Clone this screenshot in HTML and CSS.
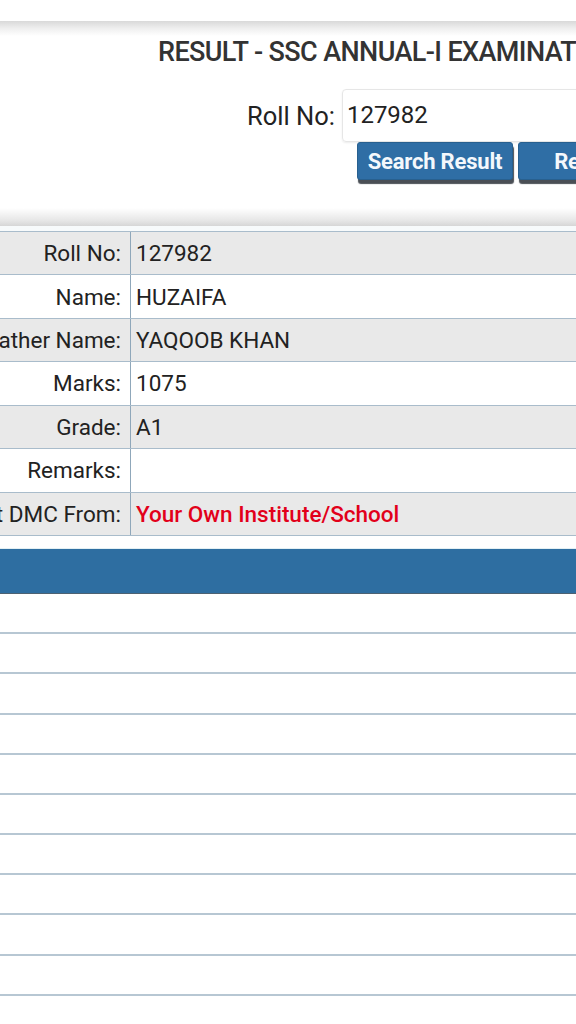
FILE: index.html
```html
<!DOCTYPE html>
<html>
<head>
<meta charset="utf-8">
<link rel="stylesheet" href="styles.css">
</head>
<body>
<div class="top-gap"></div>
<div class="panel">
  <div class="shade-top"></div>
  <div class="title">RESULT - SSC ANNUAL-I EXAMINATION 2023</div>
  <div class="search-row">
    <span class="search-label">Roll No:</span>
    <div class="input">127982</div>
  </div>
  <div class="buttons">
    <button class="btn btn-search">Search Result</button>
    <button class="btn btn-reset">Reset</button>
  </div>
  <div class="shade-bottom"></div>
</div>
<div class="gap-strip"></div>
<div class="result">
  <div class="row grey"><div class="lbl">Roll No:</div><div class="val">127982</div></div>
  <div class="row"><div class="lbl">Name:</div><div class="val">HUZAIFA</div></div>
  <div class="row grey"><div class="lbl">Father Name:</div><div class="val">YAQOOB KHAN</div></div>
  <div class="row"><div class="lbl">Marks:</div><div class="val">1075</div></div>
  <div class="row grey"><div class="lbl">Grade:</div><div class="val">A1</div></div>
  <div class="row"><div class="lbl">Remarks:</div><div class="val"></div></div>
  <div class="row grey"><div class="lbl">Get DMC From:</div><div class="val red">Your Own Institute/School</div></div>
</div>
<div class="sep"></div>
<div class="bar"></div>
<div class="lines">
  <div class="line"></div><div class="line"></div><div class="line"></div>
  <div class="line"></div><div class="line"></div><div class="line"></div>
  <div class="line"></div><div class="line"></div><div class="line"></div>
  <div class="line"></div><div class="line"></div>
</div>
</body>
</html>
```
FILE: styles.css
```css
html, body {
  margin: 0;
  padding: 0;
  background: #ffffff;
  overflow: hidden;
  width: 576px;
  height: 1024px;
  font-family: Roboto, "Noto Sans", sans-serif;
  color: #222;
}
.top-gap { height: 21px; }
.panel { background: #fff; }
.shade-top {
  height: 15px;
  background: linear-gradient(#d9d9d9, #efefef 50%, #ffffff);
}
.title {
  height: 32px;
  line-height: 32px;
  padding-left: 158px;
  font-size: 27px;
  font-weight: 500;
  color: #333;
  white-space: nowrap;
  letter-spacing: -0.6px;
}
.search-row {
  margin-top: 21px;
  display: flex;
  align-items: center;
  padding-left: 247px;
  height: 53px;
  white-space: nowrap;
}
.search-label {
  font-size: 25.5px;
  color: #222;
  margin-right: 7px;
}
.input {
  flex: none;
  width: 320px;
  height: 53px;
  box-sizing: border-box;
  border: 1px solid #e6e6e6;
  border-radius: 4px;
  box-shadow: 0 1px 2px rgba(0,0,0,0.08);
  font-size: 24px;
  line-height: 51px;
  padding-left: 4px;
  color: #222;
}
.buttons {
  display: flex;
  gap: 5px;
  padding-left: 357px;
  height: 38px;
  white-space: nowrap;
}
.btn {
  flex: none;
  height: 38px;
  box-sizing: border-box;
  background: #2f6ea5;
  border: 1px solid #28608f;
  border-radius: 3px;
  box-shadow: 1px 4px 1px #4a4f55;
  color: #f4f8fc;
  font-family: Roboto, "Noto Sans", sans-serif;
  font-size: 22px;
  font-weight: 700;
  padding: 0;
  letter-spacing: -0.2px;
}
.btn-search { width: 156px; }
.btn-reset { width: 128px; }
.shade-bottom {
  margin-top: 28px;
  height: 18px;
  background: linear-gradient(#ffffff, #e6e6e6 70%, #d6d6d6);
}
.gap-strip {
  height: 5px;
  background: #f7fafb;
}
.result {
  border-top: 1px solid #a9bccb;
}
.row {
  display: flex;
  height: 43.43px;
  box-sizing: border-box;
  border-bottom: 1px solid #a9bccb;
  background: #fff;
  font-size: 22.5px;
}
.row.grey { background: #e9e9e9; }
.lbl {
  flex: none;
  width: 131px;
  box-sizing: border-box;
  border-right: 1px solid #8fa7ba;
  display: flex;
  justify-content: flex-end;
  align-items: center;
  padding-right: 9px;
  white-space: nowrap;
  color: #222;
}
.val {
  flex: 1;
  display: flex;
  align-items: center;
  padding-left: 5px;
  white-space: nowrap;
  color: #222;
}
.val.red {
  color: #e2001a;
  font-weight: 500;
}
.sep {
  height: 13px;
  box-sizing: border-box;
  border-bottom: 1px solid #e3f0f4;
}
.bar {
  height: 45px;
  box-sizing: border-box;
  background: #2e6ea1;
  border-bottom: 1px solid #4d6272;
}
.line {
  height: 40.2px;
  box-sizing: border-box;
  border-bottom: 2px solid #b7c7d3;
}
```
